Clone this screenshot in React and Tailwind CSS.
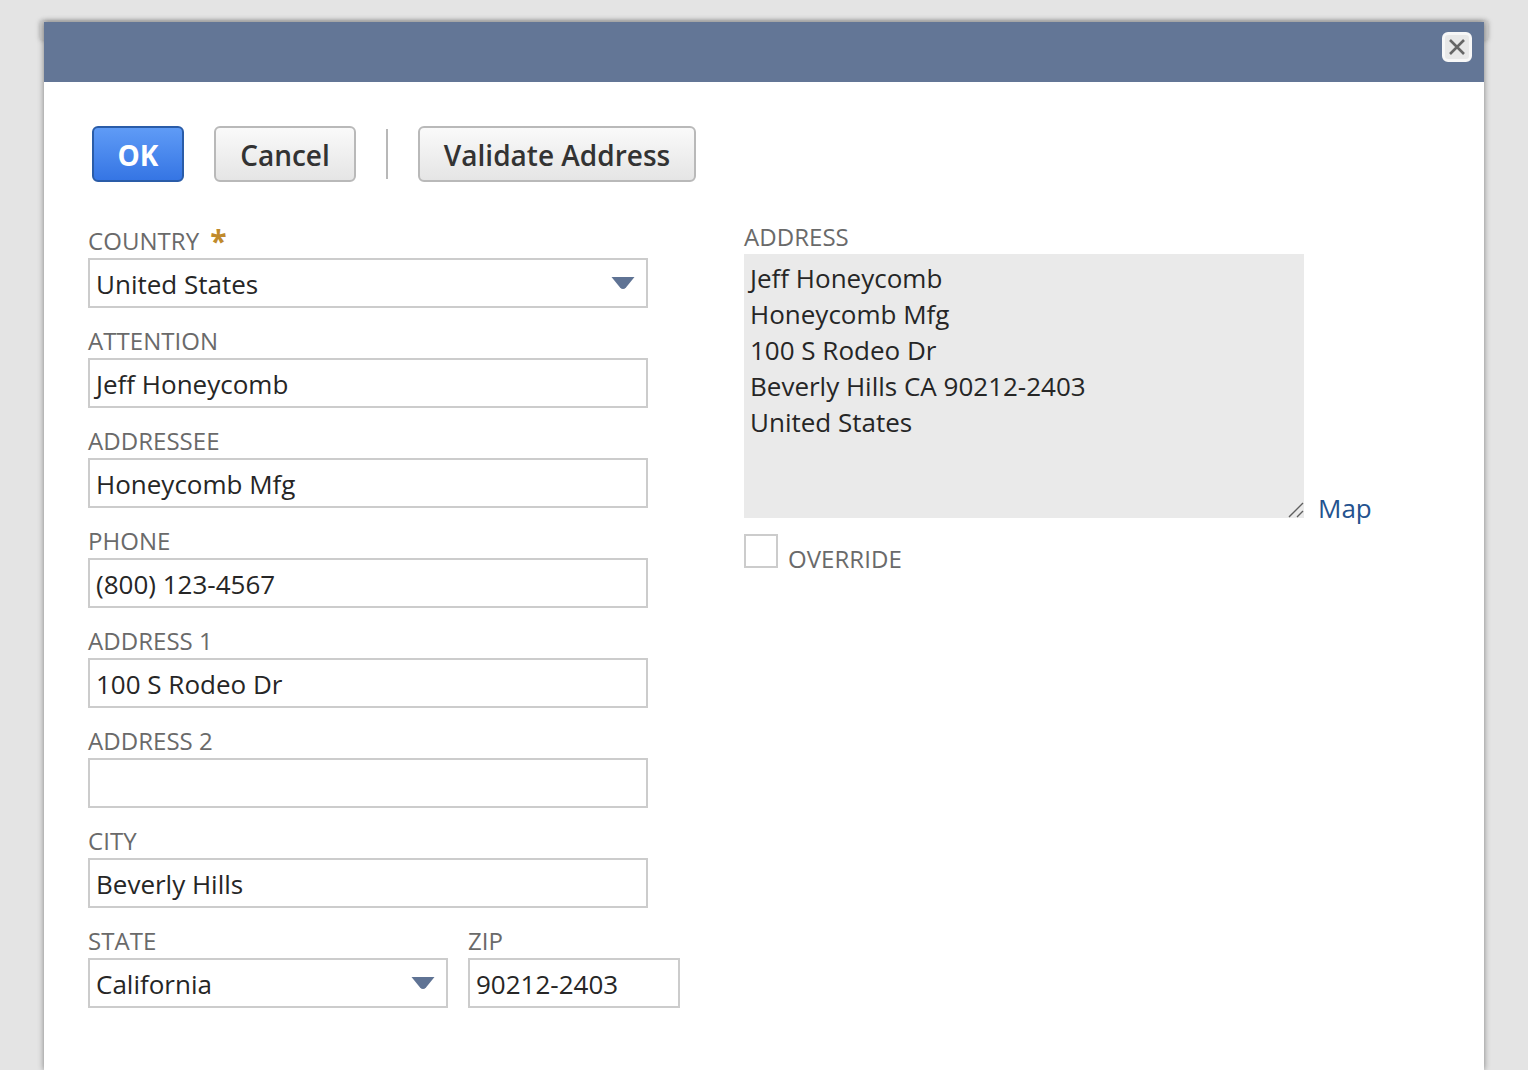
const font = { fontFamily: '"Open Sans", sans-serif' };

function Caret() {
  return (
    <svg width="24" height="16" viewBox="0 0 24 16" className="shrink-0 mr-[1px] -translate-y-[1px]">
      <path d="M0.5 2 H23.5 L15 12.5 Q12 15.5 9 12.5 Z" fill="#5f7394" />
    </svg>
  );
}

function Field({ label, value, required, select, width = 'w-[560px]' }) {
  return (
    <div className={width}>
      <div className="h-[50px] flex items-end pb-[1px] text-[24px] leading-[32px] tracking-[0.05px] text-[#6a6a6a]">
        <span>{label}</span>
        {required && <span className="ml-[11px] text-[30px] leading-[32px] font-bold text-[#c08a2c]">*</span>}
      </div>
      <div className="h-[50px] border-2 border-[#cccccc] bg-white pl-[6px] pr-[10px] pt-[2px] flex items-center justify-between text-[26px] text-[#262626]">
        <span>{value}</span>
        {select && <Caret />}
      </div>
    </div>
  );
}

function Button({ children, className }) {
  return (
    <button className={`h-[56px] rounded-[6px] border-2 pt-[2px] text-[28px] flex items-center justify-center ${className}`}>
      {children}
    </button>
  );
}

export default function App() {
  return (
    <div style={font} className="relative h-[1070px] overflow-hidden bg-[#e4e4e4]">
      {/* page strip behind the dialog */}
      <div className="absolute left-[40px] top-[21px] w-[1448px] h-[19px] bg-[#cfcfcf] shadow-[0_0_5px_rgba(0,0,0,0.25)]" />

      <div className="relative ml-[44px] pt-[22px] w-[1440px]">
        <div className="h-[1048px] bg-white shadow-[0_0_6px_rgba(0,0,0,0.45)]">
          <div className="h-[60px] bg-[#637696] flex justify-end items-start pt-[10px] pr-[12px]">
            <div className="w-[30px] h-[30px] rounded-[6px] bg-[#e8e8e8] border-[3px] border-[#f7f7f7] flex items-center justify-center">
              <svg width="20" height="20" viewBox="0 0 20 20">
                <path d="M3 3 L17 17 M17 3 L3 17" stroke="#666666" strokeWidth="2.6" />
              </svg>
            </div>
          </div>

          <div className="pl-[44px] pt-[44px]">
            <div className="flex items-center ml-[4px]">
              <Button className="w-[92px] border-[#2a5ca8] bg-gradient-to-b from-[#5f9bf6] to-[#3575e4] text-white font-bold">OK</Button>
              <Button className="w-[142px] ml-[30px] border-[#b9b9b9] bg-gradient-to-b from-[#fafafa] to-[#e5e5e5] text-[#333333] font-semibold">Cancel</Button>
              <div className="w-[2px] h-[50px] ml-[30px] bg-[#b8b8b8]" />
              <Button className="w-[278px] ml-[30px] border-[#b9b9b9] bg-gradient-to-b from-[#fafafa] to-[#e5e5e5] text-[#333333] font-semibold">Validate Address</Button>
            </div>

            <div className="flex mt-[26px]">
              <div className="w-[656px]">
                <Field label="COUNTRY" value="United States" required select />
                <Field label="ATTENTION" value="Jeff Honeycomb" />
                <Field label="ADDRESSEE" value="Honeycomb Mfg" />
                <Field label="PHONE" value="(800) 123-4567" />
                <Field label="ADDRESS 1" value="100 S Rodeo Dr" />
                <Field label="ADDRESS 2" value="" />
                <Field label="CITY" value="Beverly Hills" />
                <div className="flex gap-[20px]">
                  <Field label="STATE" value="California" select width="w-[360px]" />
                  <Field label="ZIP" value="90212-2403" width="w-[212px]" />
                </div>
              </div>

              <div className="pt-[12px]">
                <div className="h-[34px] flex items-end pb-[1px] text-[24px] leading-[32px] tracking-[0.05px] text-[#6a6a6a]">ADDRESS</div>
                <div className="flex items-end">
                  <div className="relative w-[560px] h-[264px] bg-[#eaeaea] pl-[6px] pt-[6px] text-[26px] leading-[36px] text-[#262626]">
                    <div>Jeff Honeycomb</div>
                    <div>Honeycomb Mfg</div>
                    <div>100 S Rodeo Dr</div>
                    <div>Beverly Hills CA 90212-2403</div>
                    <div>United States</div>
                    <svg width="16" height="16" viewBox="0 0 16 16" className="absolute right-0 bottom-0">
                      <path d="M1 15 L15 1 M9 15 L15 9" stroke="#5f5f5f" strokeWidth="1.4" />
                    </svg>
                  </div>
                  <a className="ml-[14px] -mb-[8px] text-[26px] leading-[36px] text-[#24528f]">Map</a>
                </div>
                <div className="flex items-end mt-[16px]">
                  <div className="w-[34px] h-[34px] border-2 border-[#cccccc] bg-white" />
                  <span className="ml-[10px] text-[24px] leading-[32px] tracking-[0.05px] text-[#6a6a6a] -mb-[7px]">OVERRIDE</span>
                </div>
              </div>
            </div>
          </div>
        </div>
      </div>
    </div>
  );
}
